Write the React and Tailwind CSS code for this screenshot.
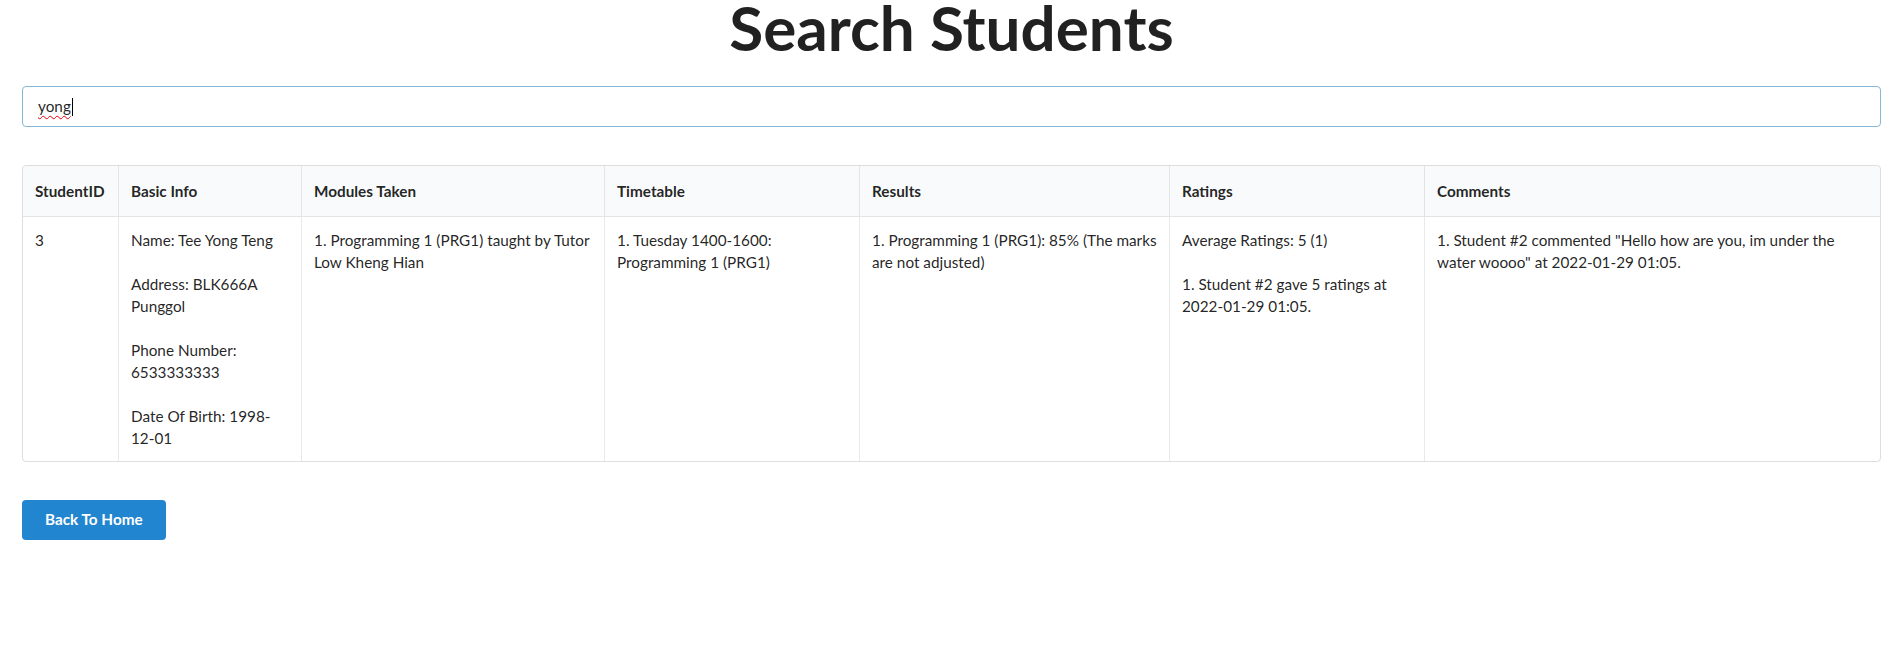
import { useState } from 'react'

const students = [
  {
    id: 3,
    name: 'Tee Yong Teng',
    address: 'BLK666A Punggol',
    phone: '6533333333',
    dob: '1998-12-01',
    modules: ['Programming 1 (PRG1) taught by Tutor Low Kheng Hian'],
    timetable: ['Tuesday 1400-1600: Programming 1 (PRG1)'],
    results: ['Programming 1 (PRG1): 85% (The marks are not adjusted)'],
    average: '5 (1)',
    ratings: ['Student #2 gave 5 ratings at 2022-01-29 01:05.'],
    comments: ['Student #2 commented "Hello how are you, im under the water woooo" at 2022-01-29 01:05.'],
  },
]

const headers = ['StudentID', 'Basic Info', 'Modules Taken', 'Timetable', 'Results', 'Ratings', 'Comments']

function NumberedList({ items }) {
  return (
    <>
      {items.map((item, i) => (
        <div key={i}>
          {i + 1}. {item}
        </div>
      ))}
    </>
  )
}

function SearchStudents() {
  const [query] = useState('yong')

  return (
    <div className="min-h-screen bg-white px-[22px] font-[Lato,sans-serif] text-[15.3px] text-[rgba(0,0,0,0.87)]">
      <h1 className="text-center text-[62px] font-bold leading-[54px]">Search Students</h1>

      {/* Search box (focused) */}
      <div className="mt-8 flex h-[41px] items-center rounded-[4px] border border-[#85b7d9] bg-white px-[15px]">
        <span className="underline decoration-red-600 decoration-wavy decoration-1 underline-offset-[3px]">{query}</span>
        <span className="ml-px h-[18px] w-px bg-black" />
      </div>

      {/* Results table */}
      <table className="mt-[38px] w-full table-fixed border-separate border-spacing-0 rounded-[4px] border border-[rgba(34,36,38,0.15)] leading-[22px]">
        <colgroup>
          <col className="w-[95px]" />
          <col className="w-[183px]" />
          <col className="w-[303px]" />
          <col className="w-[255px]" />
          <col className="w-[310px]" />
          <col className="w-[255px]" />
          <col />
        </colgroup>
        <thead>
          <tr>
            {headers.map((h, i) => (
              <th
                key={h}
                className={`border-b border-[rgba(34,36,38,0.1)] bg-[#f9fafb] px-3 py-[14px] text-left font-bold ${
                  i > 0 ? 'border-l' : ''
                } ${i === 0 ? 'rounded-tl-[4px]' : ''} ${i === headers.length - 1 ? 'rounded-tr-[4px]' : ''}`}
              >
                {h}
              </th>
            ))}
          </tr>
        </thead>
        <tbody>
          {students.map((s) => (
            <tr key={s.id} className="align-top">
              <td className="px-3 py-3">{s.id}</td>
              <td className="border-l border-[rgba(34,36,38,0.1)] px-3 py-3">
                Name: {s.name}
                <br />
                <br />
                Address: {s.address}
                <br />
                <br />
                Phone Number: {s.phone}
                <br />
                <br />
                Date Of Birth: {s.dob}
              </td>
              <td className="border-l border-[rgba(34,36,38,0.1)] px-3 py-3">
                <NumberedList items={s.modules} />
              </td>
              <td className="border-l border-[rgba(34,36,38,0.1)] px-3 py-3">
                <NumberedList items={s.timetable} />
              </td>
              <td className="border-l border-[rgba(34,36,38,0.1)] px-3 py-3">
                <NumberedList items={s.results} />
              </td>
              <td className="border-l border-[rgba(34,36,38,0.1)] px-3 py-3">
                Average Ratings: {s.average}
                <br />
                <br />
                <NumberedList items={s.ratings} />
              </td>
              <td className="border-l border-[rgba(34,36,38,0.1)] px-3 py-3">
                <NumberedList items={s.comments} />
              </td>
            </tr>
          ))}
        </tbody>
      </table>

      <button className="mt-[38px] h-10 rounded-[4px] bg-[#2185d0] px-[23px] font-bold leading-none text-white hover:bg-[#1678c2]">
        Back To Home
      </button>
    </div>
  )
}

export default function App() {
  return <SearchStudents />
}
